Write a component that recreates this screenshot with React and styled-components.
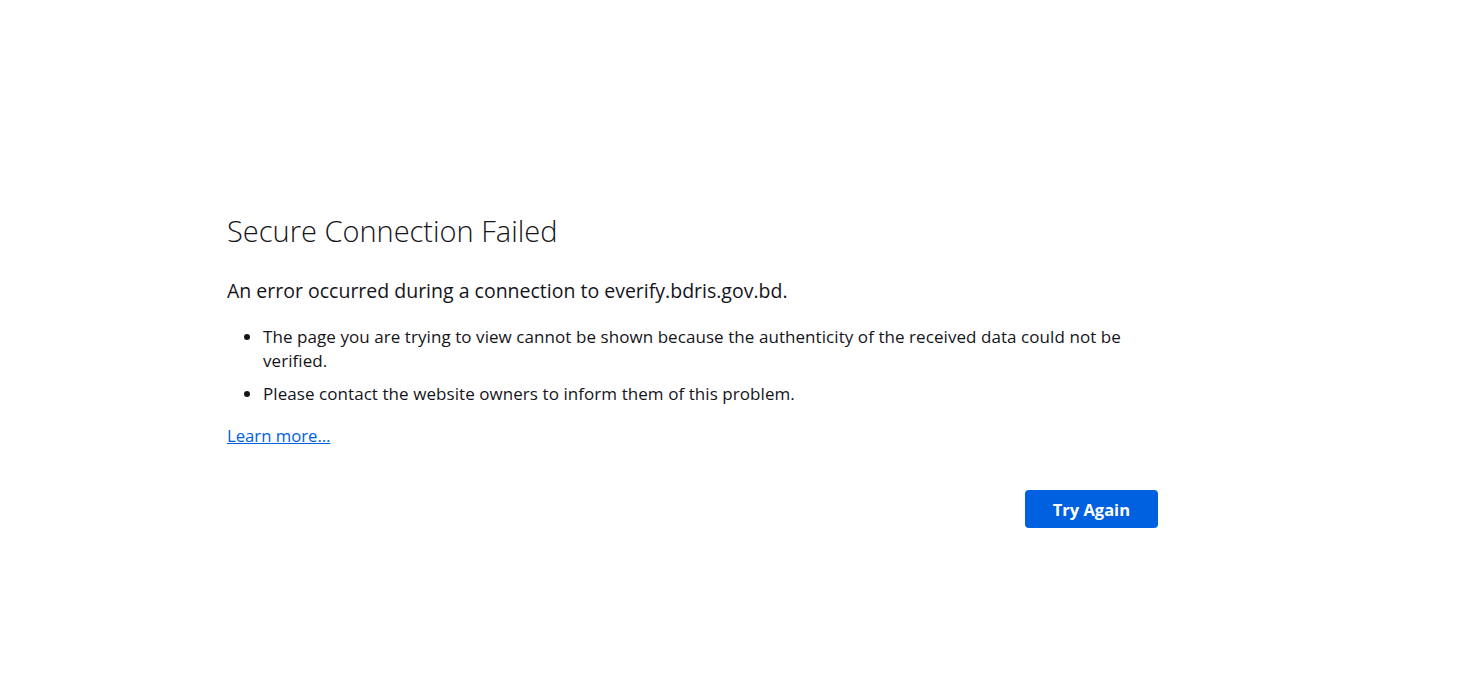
import React from "react";
import styled, { createGlobalStyle } from "styled-components";

const Global = createGlobalStyle`
  html, body { margin: 0; padding: 0; background: #fff; }
  body { font-family: "Open Sans", "Noto Sans", sans-serif; color: #15141a; }
`;

const Page = styled.main`
  display: flex;
  justify-content: flex-start;
  padding: 210px 0 0 227px;
  height: 694px;
  box-sizing: border-box;
`;

const Container = styled.div`
  width: 931px;
  display: flex;
  flex-direction: column;
`;

const Title = styled.h1`
  margin: 0;
  font-size: 29px;
  font-weight: 300;
  line-height: 42px;
`;

const Short = styled.p`
  margin: 24px 0 0;
  font-size: 19.5px;
  line-height: 30px;
`;

const List = styled.ul`
  margin: 19px 0 0;
  padding-left: 36px;
  font-size: 17px;
  line-height: 24px;
  letter-spacing: 0.065px;
`;

const Item = styled.li`
  margin-bottom: 9px;
`;

const Link = styled.a`
  margin-top: 9px;
  font-size: 16.7px;
  line-height: 24px;
  color: #0061e0;
  text-decoration: underline;
  align-self: flex-start;
`;

const Actions = styled.div`
  display: flex;
  justify-content: flex-end;
  margin-top: 42px;
`;

const Button = styled.button`
  height: 38px;
  padding: 0 28px;
  border: 0;
  border-radius: 4px;
  background: #0061e0;
  color: #fff;
  font-family: inherit;
  font-size: 16.5px;
  font-weight: 700;
  cursor: pointer;
`;

export default function App() {
  return (
    <>
      <Global />
      <Page>
        <Container>
          <Title>Secure Connection Failed</Title>
          <Short>An error occurred during a connection to everify.bdris.gov.bd.</Short>
          <List>
            <Item>The page you are trying to view cannot be shown because the authenticity of the received data could not be verified.</Item>
            <Item>Please contact the website owners to inform them of this problem.</Item>
          </List>
          <Link href="#">Learn more…</Link>
          <Actions>
            <Button>Try Again</Button>
          </Actions>
        </Container>
      </Page>
    </>
  );
}
